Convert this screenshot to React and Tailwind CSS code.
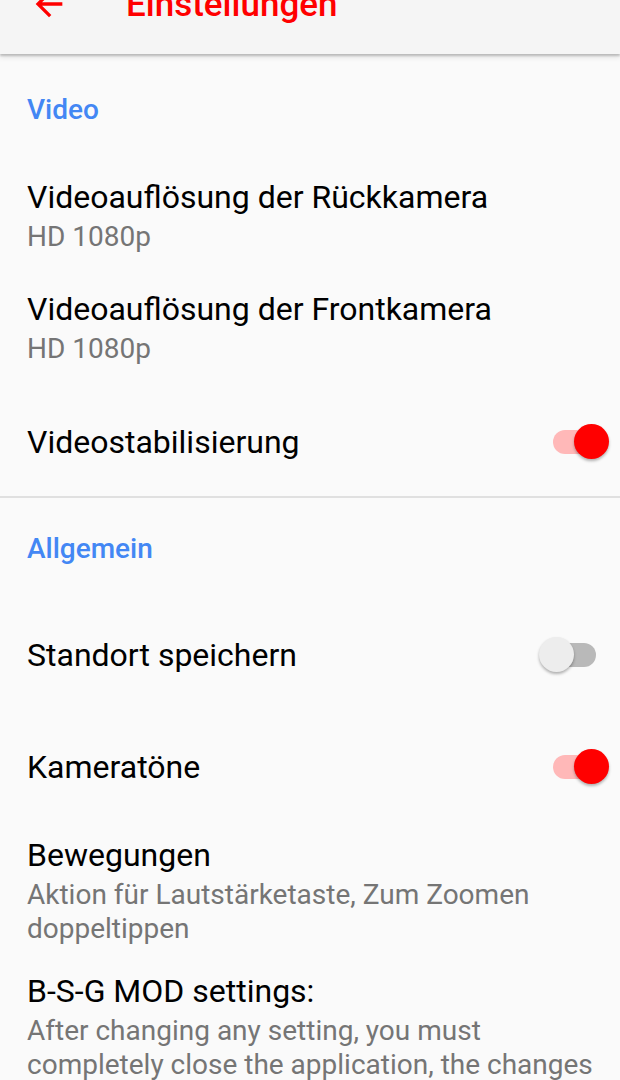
import { useState } from 'react'

function Toggle({ on }) {
  return (
    <div className={'relative w-[43px] h-[24px] rounded-full ' + (on ? 'bg-[#ffb8b8]' : 'bg-[#b9b9b9]')}>
      <div
        className={
          'absolute top-[-6px] w-[35px] h-[35px] rounded-full shadow-[0_2px_3px_rgba(0,0,0,0.3)] ' +
          (on ? 'left-[21px] bg-[#ff0000]' : 'left-[-14px] bg-[#ededed]')
        }
      />
    </div>
  )
}

function Header({ children, className = '' }) {
  return (
    <div className={'px-[27px] text-[28px] leading-[34px] font-medium text-[#4387f4] ' + className}>
      {children}
    </div>
  )
}

function Item({ title, summary, className = '' }) {
  return (
    <div className={'px-[27px] pr-[22px] ' + className}>
      <div className="text-[32px] leading-[40px] text-[#000000]">{title}</div>
      {summary && (
        <div className="pt-[3px] text-[28px] leading-[34px] text-[#757575]">{summary}</div>
      )}
    </div>
  )
}

function SwitchItem({ title, className = '' }) {
  const [on, setOn] = useState(title !== 'Standort speichern')
  return (
    <div className={'flex items-center pl-[27px] pr-[24px] ' + className} onClick={() => setOn(!on)}>
      <div className="flex-1 text-[32px] leading-[40px] text-[#000000]">{title}</div>
      <Toggle on={on} />
    </div>
  )
}

export default function App() {
  return (
    <div className="min-h-[1080px] bg-[#fafafa] font-['Roboto','Noto_Sans',sans-serif] overflow-hidden">
      <div className="relative z-10 h-[54px] bg-[#f5f5f5] shadow-[0_2px_2px_rgba(0,0,0,0.2),0_4px_5px_rgba(0,0,0,0.08)] flex items-start overflow-hidden">
        <svg viewBox="0 0 24 24" className="ml-[29px] mt-[-16px] w-[40px] h-[40px] shrink-0" fill="#ff0000">
          <path d="M20 11H7.83l5.59-5.59L12 4l-8 8 8 8 1.41-1.41L7.83 13H20v-2z" />
        </svg>
        <div className="ml-[57px] mt-[-13px] text-[35px] leading-[35px] font-medium text-[#ff0000]">
          Einstellungen
        </div>
      </div>

      <Header className="pt-[39px]">Video</Header>
      <Item className="mt-[50px]" title="Videoauflösung der Rückkamera" summary="HD 1080p" />
      <Item className="mt-[35px]" title="Videoauflösung der Frontkamera" summary="HD 1080p" />
      <SwitchItem className="mt-[56px]" title="Videostabilisierung" />

      <div className="mt-[34px] h-[2px] bg-[#e0e0e0]" />

      <Header className="mt-[34px]">Allgemein</Header>
      <SwitchItem className="mt-[69px]" title="Standort speichern" />
      <SwitchItem className="mt-[72px]" title="Kameratöne" />
      <Item
        className="mt-[48px]"
        title="Bewegungen"
        summary="Aktion für Lautstärketaste, Zum Zoomen doppeltippen"
      />
      <Item
        className="mt-[25px]"
        title="B-S-G MOD settings:"
        summary="After changing any setting, you must completely close the application, the changes will take effect after a restart."
      />
    </div>
  )
}
